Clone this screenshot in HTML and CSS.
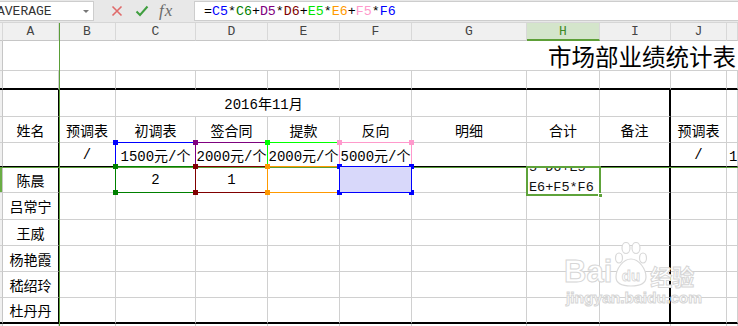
FILE: index.html
```html
<!DOCTYPE html>
<html>
<head>
  <title>市场部业绩统计表</title>
  <link rel="stylesheet" href="styles.css">
</head>
<body>
  <div class="app">
    <div class="fbar">
      <div class="namebox"><span class="nb-text">AVERAGE</span><span class="nb-arrow"></span></div>
      <div class="fbtns">
        <svg class="ic-x" width="12" height="12" viewBox="0 0 12 12"><path d="M1.5 1.5L10.5 10.5M10.5 1.5L1.5 10.5" stroke="#e06a6a" stroke-width="1.6" fill="none"/></svg>
        <svg class="ic-ok" width="14" height="12" viewBox="0 0 14 12"><path d="M1.5 6.5L5 10L12.5 1.5" stroke="#3f9e3f" stroke-width="2" fill="none"/></svg>
        <span class="ic-fx">fx</span>
      </div>
      <div class="finput">=<span class="c-blue">C5</span>*<span class="c-green">C6</span>+<span class="c-purple">D5</span>*<span class="c-maroon">D6</span>+<span class="c-lime">E5</span>*<span class="c-orange">E6</span>+<span class="c-pink">F5</span>*<span class="c-blue">F6</span></div>
    </div>

    <table class="grid">
      <colgroup>
        <col class="w-rh"><col class="w-a"><col class="w-b"><col class="w-c"><col class="w-d"><col class="w-e">
        <col class="w-f"><col class="w-g"><col class="w-h"><col class="w-i"><col class="w-j"><col class="w-k">
      </colgroup>
      <thead>
        <tr class="colhead">
          <th class="rh"></th><th>A</th><th>B</th><th>C</th><th>D</th><th>E</th>
          <th>F</th><th>G</th><th class="sel">H</th><th>I</th><th>J</th><th></th>
        </tr>
      </thead>
      <tbody>
        <tr class="r1">
          <td class="rh"></td><td colspan="11" class="title">市场部业绩统计表</td>
        </tr>
        <tr class="r2">
          <td class="rh"></td><td></td><td></td><td></td><td></td><td></td>
          <td></td><td></td><td></td><td></td><td></td><td></td>
        </tr>
        <tr class="r3 tb">
          <td class="rh"></td><td class="ca"></td><td></td><td colspan="4">2016年11月</td>
          <td></td><td></td><td class="ci"></td><td></td><td></td>
        </tr>
        <tr class="r4 tb">
          <td class="rh"></td><td class="ca">姓名</td><td>预调表</td><td>初调表</td><td>签合同</td><td>提款</td>
          <td>反向</td><td>明细</td><td>合计</td><td class="ci">备注</td><td>预调表</td><td></td>
        </tr>
        <tr class="r5 tb">
          <td class="rh"></td><td class="ca"></td><td>/</td><td>1500元/个</td><td>2000元/个</td><td>2000元/个</td>
          <td>5000元/个</td><td></td><td></td><td class="ci"></td><td>/</td><td class="left">1500元/个</td>
        </tr>
        <tr class="r6 tb">
          <td class="rh sel"></td><td class="ca">陈晨</td><td></td><td>2</td><td>1</td><td></td>
          <td></td><td></td><td></td><td class="ci"></td><td></td><td></td>
        </tr>
        <tr class="r7 tb">
          <td class="rh"></td><td class="ca">吕常宁</td><td></td><td></td><td></td><td></td>
          <td></td><td></td><td></td><td class="ci"></td><td></td><td></td>
        </tr>
        <tr class="rn tb">
          <td class="rh"></td><td class="ca">王威</td><td></td><td></td><td></td><td></td>
          <td></td><td></td><td></td><td class="ci"></td><td></td><td></td>
        </tr>
        <tr class="rn tb">
          <td class="rh"></td><td class="ca">杨艳霞</td><td></td><td></td><td></td><td></td>
          <td></td><td></td><td></td><td class="ci"></td><td></td><td></td>
        </tr>
        <tr class="rn tb">
          <td class="rh"></td><td class="ca">嵇绍玲</td><td></td><td></td><td></td><td></td>
          <td></td><td></td><td></td><td class="ci"></td><td></td><td></td>
        </tr>
        <tr class="rn tb last">
          <td class="rh"></td><td class="ca">杜丹丹</td><td></td><td></td><td></td><td></td>
          <td></td><td></td><td></td><td class="ci"></td><td></td><td></td>
        </tr>
        <tr class="rn">
          <td class="rh"></td><td></td><td></td><td></td><td></td><td></td>
          <td></td><td></td><td></td><td></td><td></td><td></td>
        </tr>
      </tbody>
    </table>

    <!-- freeze pane lines -->
    <div class="freeze-v"></div>
    <div class="freeze-h"></div>

    <!-- formula reference boxes -->
    <div class="ref c5"></div>
    <div class="ref d5"></div>
    <div class="ref e5"></div>
    <div class="ref f5"></div>
    <div class="ref c6"></div>
    <div class="ref d6"></div>
    <div class="ref e6"></div>
    <div class="ref f6"></div>

    <div class="editor">
      <div class="ed-clip">
        <div class="ed-text">5*D6+E5*<br>E6+F5*F6</div>
      </div>
      <span class="ed-handle"></span>
    </div>

    <div class="wm">
      <div class="wm-top">
        <span class="wm-bai">Bai</span>
        <svg class="wm-paw" width="36" height="46" viewBox="0 0 36 46">
          <g fill="#fff" stroke="#d9d9d9" stroke-width="1.2">
            <ellipse cx="6" cy="16" rx="3.5" ry="5"/>
            <ellipse cx="13" cy="6" rx="4" ry="5.5"/>
            <ellipse cx="23" cy="6" rx="4" ry="5.5"/>
            <ellipse cx="30" cy="16" rx="3.5" ry="5"/>
            <path d="M18 17C10 17 3 27 3 35C3 42 9 44 18 44C27 44 33 42 33 35C33 27 26 17 18 17Z"/>
          </g>
          <text x="18" y="39" text-anchor="middle" class="wm-du">du</text>
        </svg>
        <span class="wm-jy">经验</span>
      </div>
      <div class="wm-url">jingyan.baidu.com</div>
    </div>
  </div>
</body>
</html>
```

FILE: styles.css
```css
* {
  box-sizing: border-box;
}

body {
  margin: 0;
}

.app {
  position: relative;
  width: 738px;
  height: 326px;
  overflow: hidden;
  background: #fff;
  font-family: "Liberation Mono", "Noto Sans CJK SC", monospace;
}

/* formula bar */
.fbar {
  display: flex;
  height: 23px;
  background: #e8e8e8;
  border-bottom: 1px solid #d6d6d6;
}

.namebox {
  width: 94px;
  margin: 1px 0;
  background: #fff;
  border: 1px solid #cdcdcd;
  border-left: 0;
  display: flex;
  align-items: center;
  justify-content: space-between;
  overflow: hidden;
  font-size: 13px;
  color: #333;
}

.nb-text {
  margin-left: -3px;
}

.nb-arrow {
  width: 0;
  height: 0;
  margin-right: 4px;
  border-left: 3px solid transparent;
  border-right: 3px solid transparent;
  border-top: 3px solid #777;
}

.fbtns {
  width: 100px;
  display: flex;
  align-items: center;
  padding-left: 17px;
}

.ic-ok {
  margin-left: 12px;
}

.ic-fx {
  margin-left: 10px;
  font-family: "Liberation Serif", serif;
  font-style: italic;
  font-size: 17px;
  color: #6b6b6b;
  letter-spacing: 1px;
}

.finput {
  flex: 1;
  margin: 1px 0;
  background: #fff;
  border: 1px solid #cdcdcd;
  border-right: 0;
  padding-left: 9px;
  font-size: 13.3px;
  line-height: 19px;
  white-space: nowrap;
}

.c-blue { color: #0000ff; }
.c-green { color: #008000; }
.c-purple { color: #800080; }
.c-maroon { color: #800000; }
.c-lime { color: #00e600; }
.c-orange { color: #ff9900; }
.c-pink { color: #ff99cc; }

/* sheet grid */
.grid {
  table-layout: fixed;
  border-collapse: separate;
  border-spacing: 0;
  width: 738px;
}

.w-rh { width: 3px; }
.w-a { width: 56px; }
.w-b { width: 57px; }
.w-c { width: 80px; }
.w-d { width: 72px; }
.w-e { width: 72px; }
.w-f { width: 72px; }
.w-g { width: 115px; }
.w-h { width: 73px; }
.w-i { width: 71px; }
.w-j { width: 56px; }
.w-k { width: 11px; }

.grid th,
.grid td {
  padding: 0;
  white-space: nowrap;
  overflow: hidden;
  text-align: center;
}

.colhead th {
  height: 18px;
  background: #f0f0f0;
  border-right: 1px solid #d8d8d8;
  border-bottom: 1px solid #c6c6c6;
  font-weight: normal;
  font-size: 13px;
  color: #444;
}

.colhead th.sel {
  background: #d4e5cb;
  color: #3e8a24;
  border-bottom: 2px solid #5d9f37;
}

.grid td {
  border-right: 1px solid #d0d0d0;
  border-bottom: 1px solid #d0d0d0;
  font-size: 14px;
  color: #000;
}

.grid td.rh {
  background: #f0f0f0;
  border-right: 1px solid #c6c6c6;
}

.grid td.rh.sel {
  background: #6aad45;
}

.r1 td { height: 30px; }
.r2 td { height: 19px; border-bottom: 2px solid #000; }
.r3 td { height: 27px; }
.r4 td { height: 26px; }
.r5 td { height: 24px; border-bottom-color: #000; }
.r6 td { height: 26px; }
.r7 td { height: 27px; }
.rn td { height: 26px; }
.last td { border-bottom: 2px solid #000; }

.grid td.title {
  border-right: 0;
  text-align: right;
  vertical-align: bottom;
  padding-right: 2px;
  font-size: 23.5px;
  line-height: 28px;
  font-family: "Noto Sans CJK SC", sans-serif;
}

.tb td.ca { border-right-color: #000; }
.tb td.ci { border-right: 2px solid #000; }
.grid td.left { text-align: left; padding-left: 2px; }

/* freeze pane lines */
.freeze-v {
  position: absolute;
  left: 59px;
  top: 23px;
  width: 1px;
  height: 303px;
  background: #5a9e38;
}

.freeze-h {
  position: absolute;
  left: 0;
  top: 167px;
  width: 738px;
  height: 1px;
  background: #5a9e38;
}

/* formula reference boxes, handles drawn on the corners */
.ref {
  position: absolute;
  --c: #0000ff;
  background:
    linear-gradient(var(--c), var(--c)) left top / 5px 5px no-repeat,
    linear-gradient(var(--c), var(--c)) right top / 5px 5px no-repeat,
    linear-gradient(var(--c), var(--c)) left bottom / 5px 5px no-repeat,
    linear-gradient(var(--c), var(--c)) right bottom / 5px 5px no-repeat;
}

.ref::before {
  content: "";
  position: absolute;
  inset: 2px;
  border: 1px solid var(--c);
}

.c5 { left: 113px; top: 140px; width: 85px; height: 29px; --c: #0000ff; }
.d5 { left: 193px; top: 140px; width: 77px; height: 29px; --c: #800080; }
.e5 { left: 265px; top: 140px; width: 77px; height: 29px; --c: #00ff00; }
.f5 { left: 337px; top: 140px; width: 77px; height: 29px; --c: #ff99cc; }
.c6 { left: 113px; top: 164px; width: 85px; height: 31px; --c: #008000; }
.d6 { left: 193px; top: 164px; width: 77px; height: 31px; --c: #800000; }
.e6 { left: 265px; top: 164px; width: 77px; height: 31px; --c: #ff9900; }
.f6 { left: 337px; top: 164px; width: 77px; height: 31px; --c: #0000ff; z-index: 0; }

.f6::before {
  background: #d8d8fa;
  z-index: -1;
}

/* in-cell editor */
.editor {
  position: absolute;
  left: 526px;
  top: 166px;
  width: 75px;
  height: 30px;
  border: 2px solid #5ea33a;
  background: #fff;
}

.ed-clip {
  height: 26px;
  overflow: hidden;
}

.ed-text {
  margin-top: -10px;
  padding-left: 1px;
  font-size: 13.5px;
  line-height: 20px;
  color: #111;
  white-space: nowrap;
}

.ed-handle {
  position: absolute;
  right: -4px;
  bottom: -4px;
  width: 5px;
  height: 5px;
  background: #5ea33a;
  border: 1px solid #fff;
}

/* watermark */
.wm {
  position: absolute;
  left: 564px;
  top: 242px;
  font-family: "Liberation Sans", sans-serif;
  color: #fff;
  -webkit-text-stroke: 1px #d6d6d6;
}

.wm-top {
  display: flex;
  align-items: flex-end;
  height: 46px;
}

.wm-bai {
  font-size: 31px;
  font-weight: bold;
  line-height: 30px;
  margin-bottom: 1px;
}

.wm-paw {
  margin-left: 1px;
}

.wm-du {
  font-family: "Liberation Sans", sans-serif;
  font-weight: bold;
  font-size: 15px;
  fill: #fff;
  stroke: #d6d6d6;
  stroke-width: 0.8;
}

.wm-jy {
  font-family: "Noto Sans CJK SC", sans-serif;
  font-weight: bold;
  font-size: 22px;
  line-height: 26px;
  margin-left: 1px;
}

.wm-url {
  font-size: 15.5px;
  font-weight: bold;
  line-height: 16px;
  margin-top: 2px;
  margin-left: 2px;
}
```
